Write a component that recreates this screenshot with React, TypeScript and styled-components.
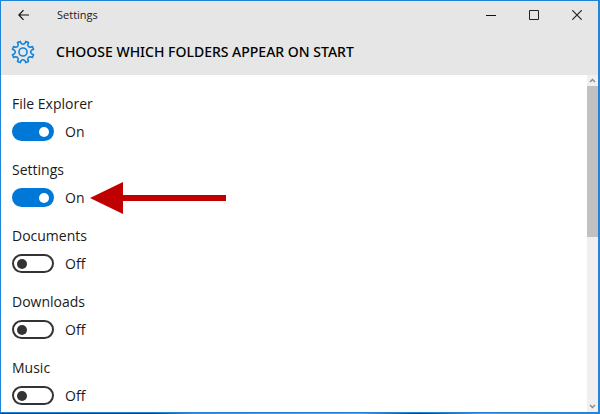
import React, { useState } from "react";
import styled, { createGlobalStyle } from "styled-components";

const GlobalStyle = createGlobalStyle`
  *, *::before, *::after { box-sizing: border-box; }
  body {
    margin: 0;
    background: #27588a;
    color: #1a1a1a;
    font: 14px/20px "Open Sans", "Noto Sans", sans-serif;
  }
  button { border: 0; padding: 0; background: none; color: inherit; font: inherit; }
`;

const Desktop = styled.div`
  display: flex;
  height: 100vh;
  padding: 0 1px 1px 0;
  background: linear-gradient(90deg, #1c4468, #0f3a62 25%, #6d8294 32%, #8095a8 60%, #123a60 70%, #8090a4 80%, #4a7bb0);
`;

const Window = styled.main`
  flex: 1;
  min-width: 0;
  display: flex;
  flex-direction: column;
  border: 1px solid #1f83d8;
  background: #fff;
`;

const Header = styled.header`
  flex: none;
  background: #e6e6e6;
`;

const TitleBar = styled.div`
  display: flex;
  align-items: center;
  height: 28px;
`;

const BackButton = styled.button`
  display: grid;
  place-items: center;
  width: 45px;
  height: 28px;
`;

const WindowTitle = styled.span`
  flex: 1;
  padding-left: 11px;
  font-size: 11px;
  line-height: 28px;
`;

const CaptionButton = styled.button`
  display: grid;
  place-items: center;
  width: 43px;
  height: 28px;
`;

const PageBar = styled.div`
  display: flex;
  align-items: center;
  gap: 21px;
  height: 46px;
  padding-left: 10px;
`;

const PageTitle = styled.h1`
  margin: 0;
  font-family: "Noto Sans", "Open Sans", sans-serif;
  font-size: 14px;
  line-height: 20px;
  font-weight: 500;
  color: #000;
  white-space: nowrap;
`;

const Body = styled.div`
  flex: 1;
  min-height: 0;
  display: flex;
`;

const SettingList = styled.div`
  flex: 1;
  min-width: 0;
  display: flex;
  flex-direction: column;
  gap: 18px;
  padding: 19px 11px 0;
  overflow: hidden;
`;

const Setting = styled.div`
  flex: none;
  display: grid;
  gap: 7px;
`;

const SettingName = styled.label`
  justify-self: start;
  line-height: 20px;
`;

const SwitchRow = styled.div`
  position: relative;
  display: flex;
  align-items: center;
  gap: 11px;
  height: 21px;
`;

const Switch = styled.input`
  appearance: none;
  display: flex;
  align-items: center;
  width: 42px;
  height: 19px;
  margin: 0;
  padding: 0 3px;
  border: 2px solid #333;
  border-radius: 10px;
  background: #fff;

  &::before {
    content: "";
    width: 10px;
    height: 10px;
    border-radius: 50%;
    background: #333;
  }
  &:checked {
    justify-content: flex-end;
    border-color: #0078d7;
    background: #0078d7;
  }
  &:checked::before { background: #fff; }
`;

const Pointer = styled.svg`
  position: absolute;
  left: 78px;
  top: -6px;
`;

const ScrollBar = styled.div`
  flex: none;
  display: flex;
  flex-direction: column;
  width: 11px;
  background: #f0f0f0;
`;

const ScrollButton = styled.button`
  flex: none;
  display: grid;
  place-items: center;
  height: 11px;
`;

const ScrollTrack = styled.div`
  flex: 1;
`;

const ScrollThumb = styled.div`
  height: 48%;
  background: #c1c1c1;
`;

const polar = (radius: number, degrees: number) => {
  const a = (degrees * Math.PI) / 180;
  return `${(12 + radius * Math.cos(a)).toFixed(2)} ${(12 + radius * Math.sin(a)).toFixed(2)}`;
};

const gearOutline =
  Array.from({ length: 8 }, (_, i) => {
    const a = 22.5 + i * 45;
    return `${i ? "L" : "M"}${polar(10.9, a - 8)} L${polar(10.9, a + 8)} L${polar(9, a + 10)} Q${polar(6.6, a + 22.5)} ${polar(9, a + 35)}`;
  }).join(" ") + "Z";

const GearIcon = () => (
  <svg width="24" height="24" viewBox="0 0 24 24" fill="none" stroke="#1583da" strokeWidth="1.6" strokeLinejoin="round" aria-hidden="true">
    <path d={gearOutline} />
    <circle cx="12" cy="12" r="4" />
  </svg>
);

const Chevron = ({ down = false }: { down?: boolean }) => (
  <svg width="7" height="5" viewBox="0 0 7 5" fill="none" stroke="#8a8a8a" strokeWidth="1.4" aria-hidden="true">
    <path d={down ? "M1 1L3.5 3.5L6 1" : "M1 4L3.5 1.5L6 4"} />
  </svg>
);

const folders = [
  { id: "explorer", name: "File Explorer", on: true },
  { id: "settings", name: "Settings", on: true, marked: true },
  { id: "documents", name: "Documents", on: false },
  { id: "downloads", name: "Downloads", on: false },
  { id: "music", name: "Music", on: false },
];

type FolderProps = { id: string; name: string; on: boolean; marked?: boolean };

const FolderSetting = ({ id, name, on, marked }: FolderProps) => {
  const [checked, setChecked] = useState(on);
  return (
    <Setting>
      <SettingName htmlFor={id}>{name}</SettingName>
      <SwitchRow>
        <Switch id={id} type="checkbox" role="switch" checked={checked} onChange={(e) => setChecked(e.target.checked)} />
        <span>{checked ? "On" : "Off"}</span>
        {marked && (
          <Pointer width="136" height="34" viewBox="0 0 136 34" fill="#c00000" aria-hidden="true">
            <path d="M0 17L33 1V14H136V20H33V33Z" />
          </Pointer>
        )}
      </SwitchRow>
    </Setting>
  );
};

export default function App() {
  return (
    <Desktop>
      <GlobalStyle />
      <Window>
        <Header>
          <TitleBar>
            <BackButton type="button" aria-label="Back">
              <svg width="11" height="12" viewBox="0 0 11 12" fill="none" stroke="#111" strokeWidth="1.2" aria-hidden="true">
                <path d="M11 6H1M5.5 1.2L.9 6L5.5 10.8" />
              </svg>
            </BackButton>
            <WindowTitle>Settings</WindowTitle>
            <CaptionButton type="button" aria-label="Minimize">
              <svg width="10" height="10" viewBox="0 0 10 10" stroke="#111" aria-hidden="true">
                <path d="M0 5.5H10" />
              </svg>
            </CaptionButton>
            <CaptionButton type="button" aria-label="Maximize">
              <svg width="10" height="10" viewBox="0 0 10 10" fill="none" stroke="#222" aria-hidden="true">
                <path d="M.5 .5H9.5V9.5H.5Z" />
              </svg>
            </CaptionButton>
            <CaptionButton type="button" aria-label="Close">
              <svg width="10" height="10" viewBox="0 0 10 10" stroke="#222" strokeWidth="1.2" aria-hidden="true">
                <path d="M.3 .3L9.7 9.7M9.7 .3L.3 9.7" />
              </svg>
            </CaptionButton>
          </TitleBar>
          <PageBar>
            <GearIcon />
            <PageTitle>CHOOSE WHICH FOLDERS APPEAR ON START</PageTitle>
          </PageBar>
        </Header>
        <Body>
          <SettingList>
            {folders.map((folder) => (
              <FolderSetting key={folder.id} {...folder} />
            ))}
          </SettingList>
          <ScrollBar>
            <ScrollButton type="button" aria-label="Scroll up">
              <Chevron />
            </ScrollButton>
            <ScrollTrack>
              <ScrollThumb />
            </ScrollTrack>
            <ScrollButton type="button" aria-label="Scroll down">
              <Chevron down />
            </ScrollButton>
          </ScrollBar>
        </Body>
      </Window>
    </Desktop>
  );
}
